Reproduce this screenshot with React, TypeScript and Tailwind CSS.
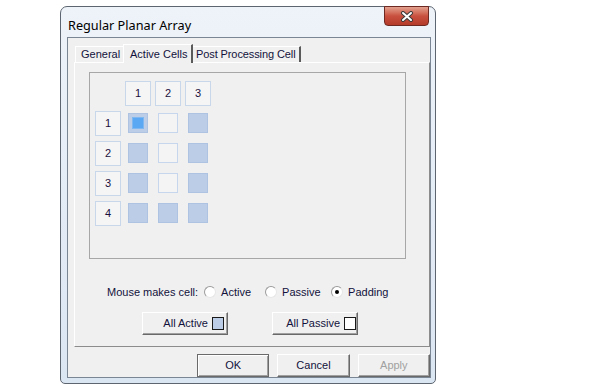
import React from 'react';

type Cell = 'active' | 'passive' | 'selected';

const grid: Cell[][] = [
  ['selected', 'passive', 'active'],
  ['active', 'passive', 'active'],
  ['active', 'passive', 'active'],
  ['active', 'active', 'active'],
];

const HeaderBtn: React.FC<{ label: string }> = ({ label }) => (
  <div className="w-[26px] h-[25px] flex items-center justify-center border border-[#c9d7ea] bg-[#f5f5f5] text-[11px] text-[#1a1040]">
    {label}
  </div>
);

const CellBox: React.FC<{ kind: Cell }> = ({ kind }) => (
  <div className="w-[26px] h-[25px] flex items-center justify-center">
    {kind === 'passive' ? (
      <div className="w-[20px] h-[20px] border border-[#c6d6ec] bg-[#f4f4f4]" />
    ) : (
      <div className="w-[20px] h-[20px] border border-[#aec3e1] bg-[#bccde7] flex items-center justify-center">
        {kind === 'selected' && <div className="w-[12px] h-[12px] border border-[#7fb8f0] bg-[#5aa8f4]" />}
      </div>
    )}
  </div>
);

const Radio: React.FC<{ label: string; checked?: boolean; width?: string }> = ({ label, checked, width }) => (
  <div className={`flex items-center gap-[5px] ${width ?? ''}`}>
    <div className="w-[12px] h-[12px] rounded-full border border-t-[#9a9a9a] border-l-[#9a9a9a] border-b-[#e6e6e6] border-r-[#e6e6e6] bg-white flex items-center justify-center">
      {checked && <div className="w-[4px] h-[4px] rounded-full bg-black" />}
    </div>
    <span>{label}</span>
  </div>
);

const ClassicBtn: React.FC<{ children: React.ReactNode; className?: string }> = ({ children, className }) => (
  <div
    className={`h-[23px] flex items-center border border-t-white border-l-white border-b-[#696969] border-r-[#696969] shadow-[inset_-1px_-1px_0_#a0a0a0] bg-[#f0f0f0] ${className ?? ''}`}
  >
    {children}
  </div>
);

export default function App() {
  return (
    <div
      className="w-[600px] h-[392px] bg-white pt-[6px] pl-[60px]"
      style={{ fontFamily: '"Liberation Sans", Arial, sans-serif' }}
    >
      <div className="relative w-[376px] h-[378px] flex flex-col rounded-t-[7px] rounded-b-[5px] border border-[#5c6570] bg-gradient-to-b from-[#eef3f9] via-[#e4ecf6] to-[#dbe6f3] pl-[6px] pr-[4px] pb-[5px]">
        {/* title bar */}
        <div className="h-[30px] pt-[6px] pl-[1px]">
          <span
            className="text-[12.7px] leading-[16px] text-black"
            style={{ fontFamily: '"Noto Sans", "Open Sans", sans-serif' }}
          >
            Regular Planar Array
          </span>
        </div>
        <div className="absolute top-[-1px] right-[6px] w-[45px] h-[20px] rounded-b-[4px] border border-[#6e2a22] bg-gradient-to-b from-[#e3a08f] via-[#c9503f] to-[#b43a2a] flex items-center justify-center">
          <svg width="14" height="11" viewBox="0 0 14 11">
            <path d="M3 2 L11 9 M11 2 L3 9" stroke="#3a3a3a" strokeWidth="4" strokeLinecap="round" />
            <path d="M3 2 L11 9 M11 2 L3 9" stroke="#ffffff" strokeWidth="2" strokeLinecap="round" />
          </svg>
        </div>

        {/* client */}
        <div className="flex-1 border border-[#7b8694] bg-[#f0f0f0] overflow-hidden flex flex-col text-[11px] text-[#12123c]">
          {/* tabs */}
          <div className="h-[24px] pl-[7px] flex items-end">
            <div className="h-[16px] w-[50px] border-t border-l border-white border-r border-r-[#a0a0a0] flex items-center pl-[5px]">
              General
            </div>
            <div className="relative z-10 -ml-[2px] -mb-[1px] h-[19px] w-[70px] border-t border-l border-white border-r-2 border-r-[#5a5a5a] bg-[#f0f0f0] flex items-start pt-[1px] pl-[6px]">
              Active Cells
            </div>
            <div className="h-[16px] w-[108px] border-t border-white border-r-2 border-r-[#5a5a5a] flex items-center pl-[3px] whitespace-nowrap tracking-[-0.1px]">
              Post Processing Cell
            </div>
          </div>

          {/* tab page */}
          <div className="ml-[6px] h-[288px] border border-t-white border-l-white border-b-[#8c8c8c] border-r-[#8c8c8c] flex flex-col">
            <div className="ml-[14px] mt-[9px] w-[317px] h-[187px] border border-[#a7a7a7] pl-[5px] pt-[8px]">
              <div className="grid grid-cols-[26px_26px_26px_26px] gap-x-[4px] gap-y-[5px]">
                <div />
                <HeaderBtn label="1" />
                <HeaderBtn label="2" />
                <HeaderBtn label="3" />
                {grid.map((row, r) => (
                  <React.Fragment key={r}>
                    <HeaderBtn label={String(r + 1)} />
                    {row.map((c, i) => (
                      <CellBox key={i} kind={c} />
                    ))}
                  </React.Fragment>
                ))}
              </div>
            </div>

            <div className="mt-[26px] pl-[32px] h-[14px] flex items-center">
              <span className="mr-[6px]">Mouse makes cell:</span>
              <Radio label="Active" width="w-[61px]" />
              <Radio label="Passive" width="w-[66px]" />
              <Radio label="Padding" checked />
            </div>

            <div className="mt-[13px] pl-[67px] flex gap-[44px]">
              <ClassicBtn className="w-[86px] justify-end pr-[3px] gap-[4px]">
                <span>All Active</span>
                <div className="w-[12px] h-[13px] border border-[#1a1a1a] bg-[#bccde7]" />
              </ClassicBtn>
              <ClassicBtn className="w-[86px] justify-end pr-[1px] gap-[4px]">
                <span>All Passive</span>
                <div className="w-[12px] h-[13px] border border-[#1a1a1a] bg-white" />
              </ClassicBtn>
            </div>
          </div>

          {/* dialog buttons */}
          <div className="mt-[7px] pl-[129px] flex gap-[8px]">
            <div className="w-[73px] h-[23px] border border-[#6a6a6a] shadow-[inset_1px_1px_0_#ffffff,inset_-1px_-1px_0_#a0a0a0] flex items-center justify-center">
              OK
            </div>
            <ClassicBtn className="w-[73px] justify-center">Cancel</ClassicBtn>
            <ClassicBtn className="w-[73px] justify-center text-[#a0a0a0]">Apply</ClassicBtn>
          </div>
        </div>
      </div>
    </div>
  );
}
